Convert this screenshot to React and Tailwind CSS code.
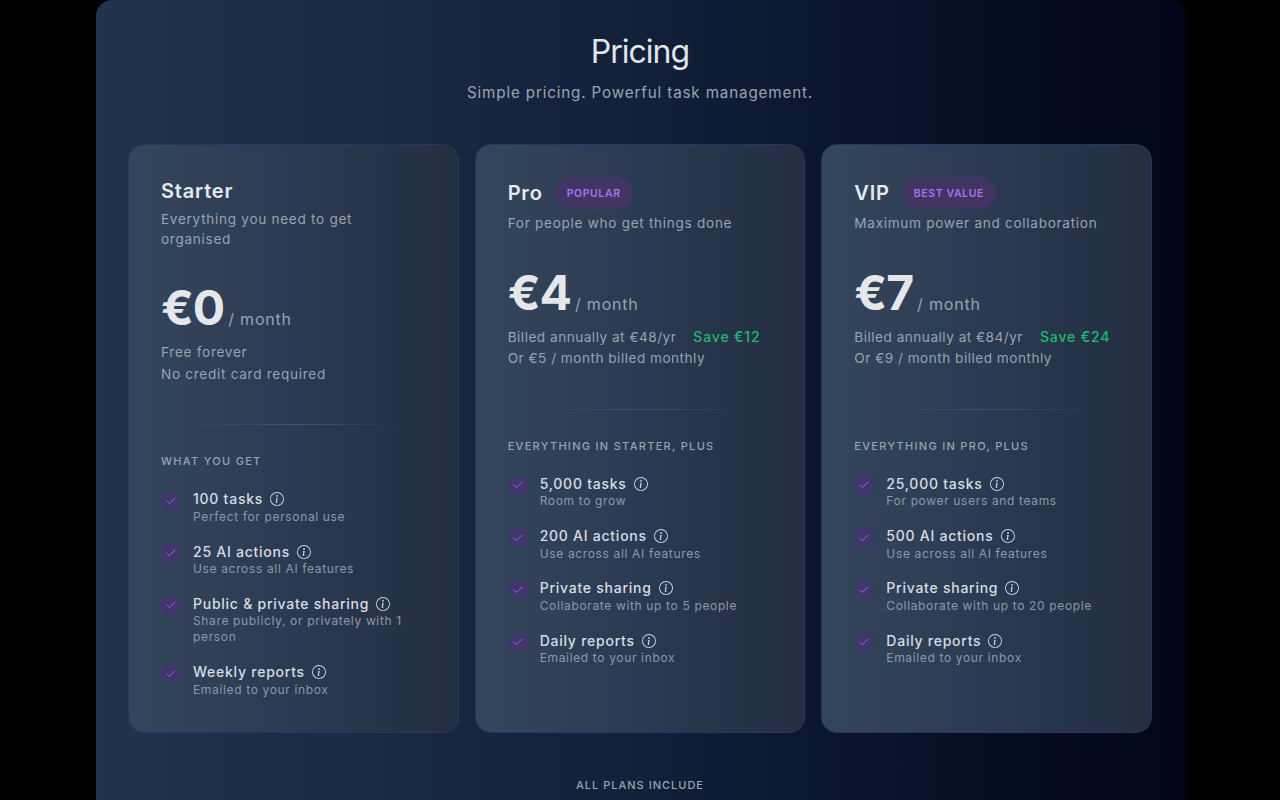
import { BsInfoCircle } from "react-icons/bs";
import { Check } from "lucide-react";

const plans = [
  {
    name: "Starter",
    desc: "Everything you need to get organised",
    price: "€0",
    priceGap: "mt-[35px]",
    lines: [["Free forever"], ["No credit card required"]],
    lineTracking: "tracking-[0.7px]",
    label: "WHAT YOU GET",
    features: [
      ["100 tasks", "Perfect for personal use"],
      ["25 AI actions", "Use across all AI features"],
      ["Public & private sharing", "Share publicly, or privately with 1 person"],
      ["Weekly reports", "Emailed to your inbox"],
    ],
  },
  {
    name: "Pro",
    badge: "POPULAR",
    desc: "For people who get things done",
    price: "€4",
    priceGap: "mt-[35.5px]",
    lines: [["Billed annually at €48/yr", "Save €12"], ["Or €5 / month billed monthly"]],
    lineTracking: "tracking-[0.5px]",
    label: "EVERYTHING IN STARTER, PLUS",
    features: [
      ["5,000 tasks", "Room to grow"],
      ["200 AI actions", "Use across all AI features"],
      ["Private sharing", "Collaborate with up to 5 people"],
      ["Daily reports", "Emailed to your inbox"],
    ],
  },
  {
    name: "VIP",
    badge: "BEST VALUE",
    desc: "Maximum power and collaboration",
    price: "€7",
    priceGap: "mt-[35.5px]",
    lines: [["Billed annually at €84/yr", "Save €24"], ["Or €9 / month billed monthly"]],
    lineTracking: "tracking-[0.5px]",
    label: "EVERYTHING IN PRO, PLUS",
    features: [
      ["25,000 tasks", "For power users and teams"],
      ["500 AI actions", "Use across all AI features"],
      ["Private sharing", "Collaborate with up to 20 people"],
      ["Daily reports", "Emailed to your inbox"],
    ],
  },
];

function Feature({ title, sub }) {
  return (
    <li className="flex gap-3">
      <span className="mt-[2px] flex h-5 w-5 shrink-0 items-center justify-center rounded-full bg-[#42376c]">
        <Check size={12} strokeWidth={1.5} className="text-[#a07ff0]" />
      </span>
      <div>
        <div className="flex items-center gap-[7px] pt-[0.5px] text-sm leading-5 font-medium tracking-[0.75px] text-[#d8dde3]">
          {title}
          <BsInfoCircle size={14} className="text-[#cfd5dc]" />
        </div>
        <p className="-mt-[0.5px] text-xs leading-4 tracking-[0.65px] text-[#8f99a6]">{sub}</p>
      </div>
    </li>
  );
}

function PlanCard({ plan }) {
  return (
    <div className="rounded-2xl border border-[#2f3263] bg-gradient-to-r from-[#34465c] via-[#2a3a52] to-[#232e40] px-8 pt-8 pb-[34.5px]">
      <div className="flex items-center gap-3">
        <h2 className="text-xl leading-7 font-semibold tracking-[0.8px] text-[#e5e9ee]">{plan.name}</h2>
        {plan.badge && (
          <span className="rounded-full bg-[#433563] px-3 pt-[8.5px] pb-[7.5px] text-[10.4px] leading-4 font-semibold tracking-[0.67px] text-[#a970f0]">
            {plan.badge}
          </span>
        )}
      </div>
      <p className="mt-1 text-[13.6px] leading-5 tracking-[0.7px] text-[#9aa3ae]">{plan.desc}</p>
      <div className={`${plan.priceGap} flex items-baseline gap-1`}>
        <span className="text-5xl leading-12 font-bold tracking-[-1px] text-[#e5e7eb]">{plan.price}</span>
        <span className="text-base tracking-[0.8px] text-[#9aa3ae]">/ month</span>
      </div>
      <div className={`mt-[10px] text-[13.6px] leading-[21.5px] text-[#9aa3ae] ${plan.lineTracking}`}>
        {plan.lines.map((line) => (
          <div key={line[0]}>
            {line[0]}
            {line[1] && (
              <span className="ml-[17px] text-sm font-medium tracking-[0.85px] text-[#1fb873]">{line[1]}</span>
            )}
          </div>
        ))}
      </div>
      <div className="mx-6 mt-[39px] h-px bg-gradient-to-r from-transparent via-[#42536d] to-transparent" />
      <h3 className="mt-7 text-[11px] leading-4 font-medium tracking-[1.3px] text-[#9aa3ae]">{plan.label}</h3>
      <ul className="mt-[19.75px] flex flex-col gap-[16.3px]">
        {plan.features.map((f) => (
          <Feature key={f[0]} title={f[0]} sub={f[1]} />
        ))}
      </ul>
    </div>
  );
}

export default function App() {
  return (
    <div className="h-[800px] overflow-hidden bg-black font-['Inter',sans-serif]">
      <div className="mx-auto h-[900px] w-[1088px] rounded-t-2xl bg-gradient-to-r from-[#20344d] via-[#12203a] to-[#020617] px-8 pt-8 shadow-[4px_0_8px_#030712]">
        <h1 className="text-center text-[32px] leading-10 font-normal tracking-[-1px] text-[#e2e5ea]">Pricing</h1>
        <p className="mt-[9px] text-center text-[15.2px] leading-6 tracking-[0.85px] text-[#9ca3af]">
          Simple pricing. Powerful task management.
        </p>
        <div className="mt-[39px] grid grid-cols-3 gap-4">
          {plans.map((p) => (
            <PlanCard key={p.name} plan={p} />
          ))}
        </div>
        <p className="mt-[43.5px] text-center text-[11px] leading-4 font-medium tracking-[1px] text-[#9aa3ae]">
          ALL PLANS INCLUDE
        </p>
      </div>
    </div>
  );
}
